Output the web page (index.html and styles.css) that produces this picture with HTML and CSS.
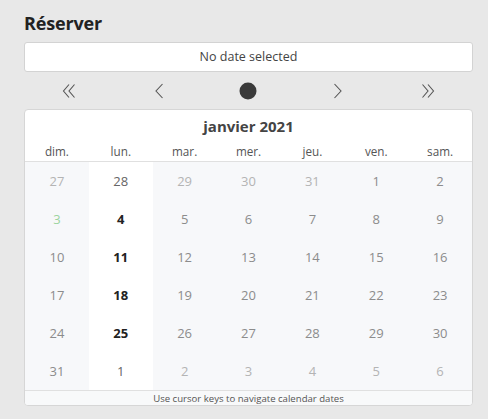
FILE: index.html
```html
<!DOCTYPE html>
<html lang="fr">
<head>
<meta charset="utf-8">
<title>Réserver</title>
<link rel="stylesheet" href="styles.css">
</head>
<body>
<div class="page">
  <h2 class="title">Réserver</h2>
  <output class="selected">No date selected</output>
  <div class="nav">
    <button class="nav-btn" aria-label="Previous year">
      <svg width="14" height="16" viewBox="0 0 14 16"><path d="M7 1.5 L1.5 8 L7 14.5 M12.5 1.5 L7 8 L12.5 14.5" fill="none" stroke="#555" stroke-width="1.1"/></svg>
    </button>
    <button class="nav-btn" aria-label="Previous month">
      <svg width="10" height="16" viewBox="0 0 10 16"><path d="M8.5 1 L2 8 L8.5 15" fill="none" stroke="#555" stroke-width="1.1"/></svg>
    </button>
    <button class="nav-btn" aria-label="Current month">
      <svg width="18" height="18" viewBox="0 0 18 18"><circle cx="9" cy="9" r="8.5" fill="#3a3a3a"/></svg>
    </button>
    <button class="nav-btn" aria-label="Next month">
      <svg width="10" height="16" viewBox="0 0 10 16"><path d="M1.5 1 L8 8 L1.5 15" fill="none" stroke="#555" stroke-width="1.1"/></svg>
    </button>
    <button class="nav-btn" aria-label="Next year">
      <svg width="14" height="16" viewBox="0 0 14 16"><path d="M1.5 1.5 L7 8 L1.5 14.5 M7 1.5 L12.5 8 L7 14.5" fill="none" stroke="#555" stroke-width="1.1"/></svg>
    </button>
  </div>
  <div class="cal">
    <div class="cal-head">janvier 2021</div>
    <div class="weekdays">
      <span>dim.</span><span>lun.</span><span>mar.</span><span>mer.</span><span>jeu.</span><span>ven.</span><span>sam.</span>
    </div>
    <div class="grid">
      <span class="d off">27</span><span class="d en out">28</span><span class="d off">29</span><span class="d off">30</span><span class="d off">31</span><span class="d dis">1</span><span class="d dis">2</span>
      <span class="d dis today">3</span><span class="d en">4</span><span class="d dis">5</span><span class="d dis">6</span><span class="d dis">7</span><span class="d dis">8</span><span class="d dis">9</span>
      <span class="d dis">10</span><span class="d en">11</span><span class="d dis">12</span><span class="d dis">13</span><span class="d dis">14</span><span class="d dis">15</span><span class="d dis">16</span>
      <span class="d dis">17</span><span class="d en">18</span><span class="d dis">19</span><span class="d dis">20</span><span class="d dis">21</span><span class="d dis">22</span><span class="d dis">23</span>
      <span class="d dis">24</span><span class="d en">25</span><span class="d dis">26</span><span class="d dis">27</span><span class="d dis">28</span><span class="d dis">29</span><span class="d dis">30</span>
      <span class="d dis">31</span><span class="d en out">1</span><span class="d off">2</span><span class="d off">3</span><span class="d off">4</span><span class="d off">5</span><span class="d off">6</span>
    </div>
    <div class="cal-foot">Use cursor keys to navigate calendar dates</div>
  </div>
</div>
</body>
</html>
```

FILE: styles.css
```css
* { box-sizing: border-box; }
html, body { margin: 0; padding: 0; }
body {
  background: #e8e8e8;
  font-family: "Open Sans", "Noto Sans", sans-serif;
  color: #333;
  width: 488px;
  height: 419px;
  overflow: hidden;
}
.page {
  padding: 11px 15px 0 24px;
}
.title {
  margin: 0;
  font-size: 18px;
  font-weight: 700;
  line-height: 24px;
  color: #222;
  letter-spacing: -0.15px;
}
.selected {
  display: block;
  margin-top: 7px;
  height: 30px;
  line-height: 28px;
  background: #fff;
  border: 1px solid #d3d3d3;
  border-radius: 3px;
  text-align: center;
  font-size: 12.5px;
  color: #444;
}
.nav {
  display: grid;
  grid-template-columns: repeat(5, 1fr);
  height: 37px;
}
.nav-btn {
  border: 0;
  background: transparent;
  padding: 0;
  display: flex;
  align-items: center;
  justify-content: center;
}
.cal {
  background: #fff;
  border: 1px solid #d6d6d6;
  border-radius: 4px;
  overflow: hidden;
}
.cal-head {
  text-align: center;
  font-weight: 700;
  font-size: 15px;
  color: #444;
  height: 32px;
  line-height: 33px;
}
.weekdays {
  display: grid;
  grid-template-columns: repeat(7, 1fr);
  border-bottom: 1px solid #e0e0e0;
  height: 20px;
}
.weekdays span {
  text-align: center;
  font-size: 11.7px;
  line-height: 18px;
  color: #555;
}
.grid {
  display: grid;
  grid-template-columns: repeat(7, 1fr);
  grid-auto-rows: 38px;
}
.d {
  display: flex;
  align-items: center;
  justify-content: center;
  font-size: 13px;
  background: #f7f8fa;
}
.d.off { color: #b4b4b4; }
.d.dis { color: #8c8c8c; }
.d.today { color: #9cd49f; }
.d.en { background: #fff; color: #222; font-weight: 700; }
.d.en.out { color: #666; font-weight: 400; }
.cal-foot {
  border-top: 1px solid #e0e0e0;
  background: #f8f9fa;
  text-align: center;
  font-size: 9.6px;
  line-height: 15px;
  height: 15px;
  color: #555;
}
```
